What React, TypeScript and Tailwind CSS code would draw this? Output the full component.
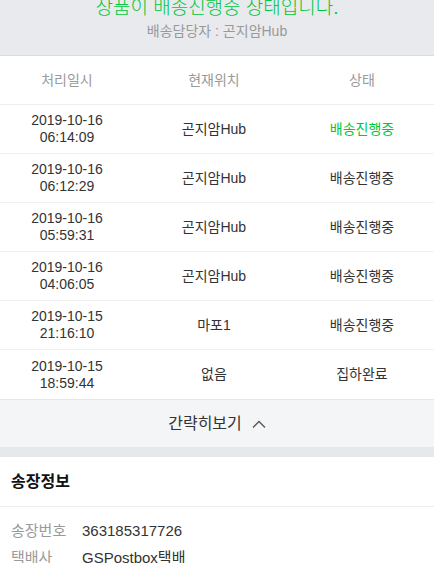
const rows = [
  { date: "2019-10-16", time: "06:14:09", place: "곤지암Hub", status: "배송진행중", active: true },
  { date: "2019-10-16", time: "06:12:29", place: "곤지암Hub", status: "배송진행중" },
  { date: "2019-10-16", time: "05:59:31", place: "곤지암Hub", status: "배송진행중" },
  { date: "2019-10-16", time: "04:06:05", place: "곤지암Hub", status: "배송진행중" },
  { date: "2019-10-15", time: "21:16:10", place: "마포1", status: "배송진행중" },
  { date: "2019-10-15", time: "18:59:44", place: "없음", status: "집하완료" },
];

const font = { fontFamily: '"Liberation Sans", "Noto Sans CJK KR", sans-serif' };

export default function App() {
  return (
    <div className="w-[434px] h-[563px] overflow-hidden bg-white" style={font}>
      {/* 상단 상태 */}
      <div className="bg-[#e9eaee] border-b border-[#dcdde1] text-center h-[56px]">
        <p className="text-[19px] leading-[16px] font-light text-[#00c73c]">상품이 배송진행중 상태입니다.</p>
        <p className="text-[14px] leading-[20px] mt-[5px] text-[#999]">배송담당자 : 곤지암Hub</p>
      </div>

      {/* 배송 내역 */}
      <div className="grid grid-cols-[134px_160px_1fr] h-[49px] items-center text-center text-[14px] text-[#9a9a9a] border-b border-[#eeeeee]">
        <span>처리일시</span>
        <span>현재위치</span>
        <span className="pr-[4px]">상태</span>
      </div>
      {rows.map((r, i) => (
        <div
          key={i}
          className={`grid grid-cols-[134px_160px_1fr] h-[49px] items-center text-center text-[14px] text-[#333] ${i < rows.length - 1 ? "border-b border-[#f0f0f0]" : ""}`}
        >
          <div className="leading-[17px]">
            <div>{r.date}</div>
            <div>{r.time}</div>
          </div>
          <span>{r.place}</span>
          <span className={`pr-[4px] ${r.active ? "text-[#00c73c]" : ""}`}>{r.status}</span>
        </div>
      ))}

      <button className="w-full h-[49px] bg-[#f3f5f6] border-t border-b border-[#e5e8ea] flex items-center justify-center gap-[10px] text-[16px] text-[#333]">
        <span>간략히보기</span>
        <svg width="14" height="8" viewBox="0 0 14 8" fill="none" stroke="#555" strokeWidth="1.3">
          <polyline points="1,7.5 7,1.5 13,7.5" />
        </svg>
      </button>
      <div className="h-[9px] bg-[#e6e9ec]" />

      {/* 송장정보 */}
      <div className="h-[50px] flex items-center px-[11px] border-b border-[#eeeeee]">
        <h2 className="text-[16px] font-semibold text-[#111]">송장정보</h2>
      </div>
      <div className="px-[11px] pt-[13px] text-[15px]">
        <div className="flex leading-[22px] h-[27px]">
          <span className="w-[71px] text-[#9a9a9a]">송장번호</span>
          <span className="text-[#333]">363185317726</span>
        </div>
        <div className="flex leading-[22px] h-[27px]">
          <span className="w-[71px] text-[#9a9a9a]">택배사</span>
          <span className="text-[#333]">GSPostbox택배</span>
        </div>
      </div>
    </div>
  );
}
